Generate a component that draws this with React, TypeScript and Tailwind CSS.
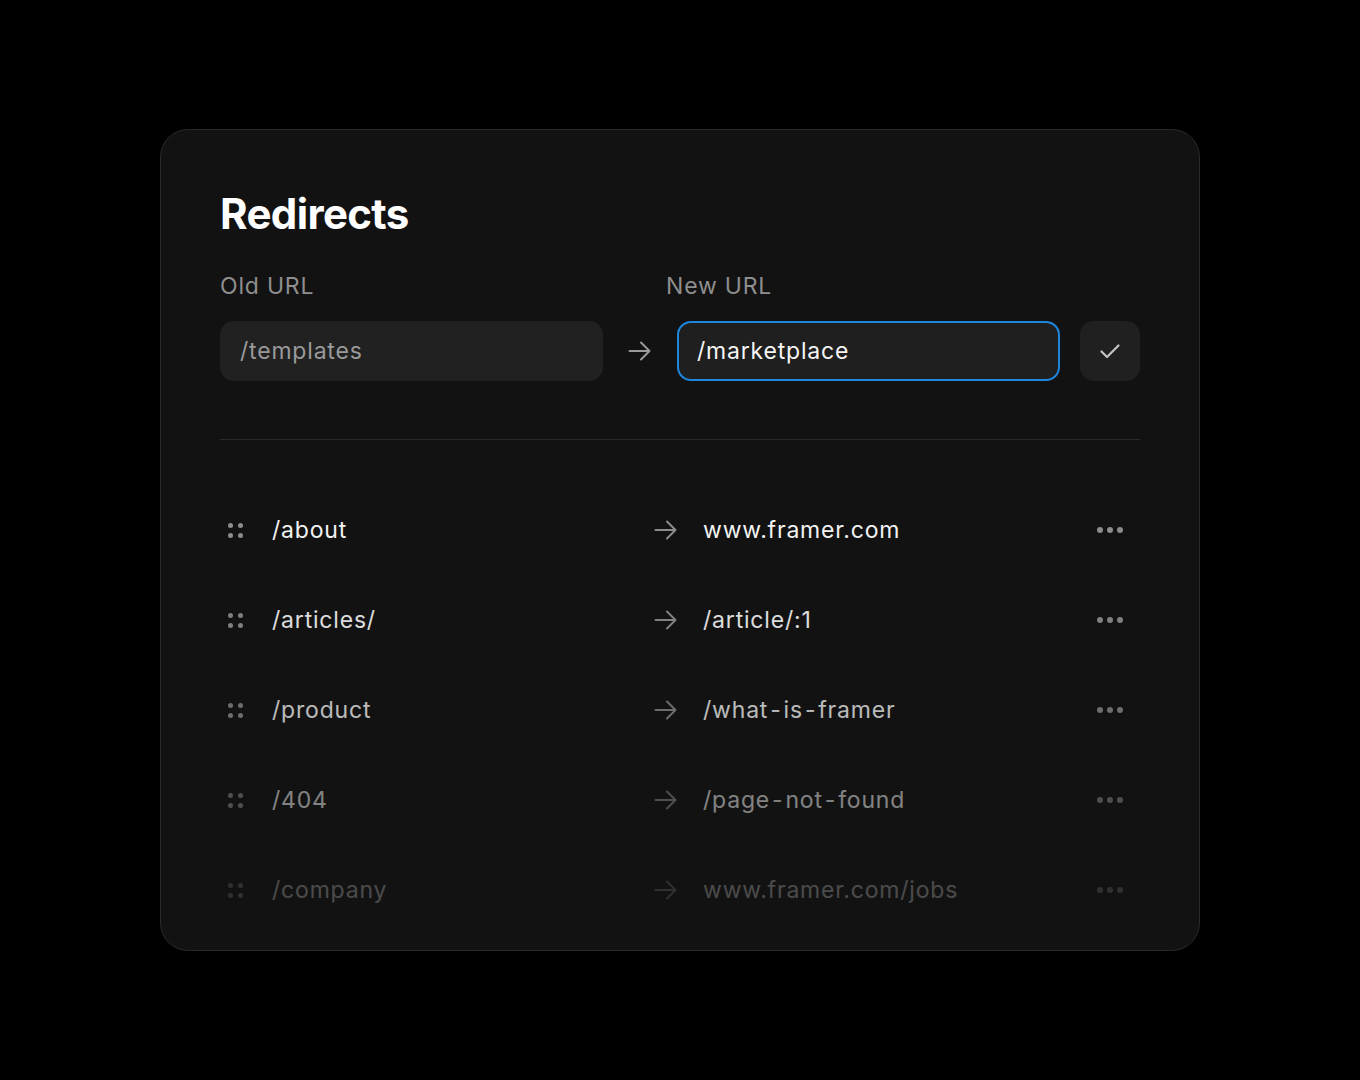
import React from "react";

const rows = [
  { from: "/about", to: "www.framer.com", fade: "opacity-100" },
  { from: "/articles/", to: "/article/:1", fade: "opacity-90" },
  { from: "/product", to: "/what-is-framer", fade: "opacity-75" },
  { from: "/404", to: "/page-not-found", fade: "opacity-50" },
  { from: "/company", to: "www.framer.com/jobs", fade: "opacity-25" },
];

function Arrow({ className }: { className?: string }) {
  return (
    <svg width="24" height="24" viewBox="0 0 24 24" fill="none" className={className}>
      <path d="M1.5 12h20M13 3.5l8.5 8.5-8.5 8.5" stroke="currentColor" strokeWidth="2" strokeLinecap="round" strokeLinejoin="round" />
    </svg>
  );
}

function Handle() {
  return (
    <div className="grid grid-cols-2 gap-[5px] w-[15px]">
      <span className="w-[5px] h-[5px] rounded-full bg-[#8c8c8c]" />
      <span className="w-[5px] h-[5px] rounded-full bg-[#8c8c8c]" />
      <span className="w-[5px] h-[5px] rounded-full bg-[#8c8c8c]" />
      <span className="w-[5px] h-[5px] rounded-full bg-[#8c8c8c]" />
    </div>
  );
}

function More() {
  return (
    <div className="flex gap-[4px]">
      <span className="w-[6px] h-[6px] rounded-full bg-[#8c8c8c]" />
      <span className="w-[6px] h-[6px] rounded-full bg-[#8c8c8c]" />
      <span className="w-[6px] h-[6px] rounded-full bg-[#8c8c8c]" />
    </div>
  );
}

// hyphens in the reference sit with a little air around them
function Spaced({ text }: { text: string }) {
  const parts = text.split("-");
  return (
    <>
      {parts.map((p, i) => (
        <React.Fragment key={i}>
          {i > 0 && <span className="px-[2px]">-</span>}
          {p}
        </React.Fragment>
      ))}
    </>
  );
}

export default function App() {
  return (
    <div
      className="min-h-[1080px] w-full bg-black flex justify-center pt-[129px]"
      style={{ fontFamily: "Inter, 'Noto Sans', sans-serif" }}
    >
      <div className="w-[1040px] h-[822px] rounded-[28px] border border-[#2a2a2a] bg-[#121212] px-[59px] pt-[60px] text-[23px] tracking-[0.035em]">
        <h1 className="text-[42px] leading-[48px] font-bold tracking-[-0.015em] text-white">Redirects</h1>

        <div className="flex mt-[34px] leading-[28px] text-[#8e8e8e]">
          <div className="w-[446px]">Old URL</div>
          <div>New URL</div>
        </div>

        <div className="flex items-center mt-[21px]">
          <div className="w-[383px] h-[60px] rounded-[14px] bg-[#212121] flex items-center px-[20px] text-[#9a9a9a]">
            /templates
          </div>
          <div className="w-[74px] flex justify-center text-[#9a9a9a]">
            <Arrow />
          </div>
          <div className="w-[383px] h-[60px] rounded-[14px] bg-[#1f1f1f] border-2 border-[#1f86de] flex items-center px-[18px] text-[#f5f5f5]">
            /marketplace
          </div>
          <button className="ml-[20px] w-[60px] h-[60px] rounded-[14px] bg-[#202020] flex items-center justify-center text-[#c4c4c4]">
            <svg width="24" height="24" viewBox="0 0 24 24" fill="none">
              <path d="M3.5 12.5l5.5 5.5L20.5 6.5" stroke="currentColor" strokeWidth="2.2" strokeLinecap="round" strokeLinejoin="round" />
            </svg>
          </button>
        </div>

        <div className="h-px bg-[#2a2a2a] mt-[58px]" />

        <div className="flex flex-col gap-[30px] mt-[60px]">
          {rows.map((r) => (
            <div key={r.from} className={`flex items-center h-[60px] ${r.fade}`}>
              <div className="w-[52px] pl-[8px]">
                <Handle />
              </div>
              <div className="w-[382px] text-[#f2f2f2]">{r.from}</div>
              <div className="w-[49px] text-[#8c8c8c]">
                <Arrow />
              </div>
              <div className="flex-1 text-[#f2f2f2]">
                <Spaced text={r.to} />
              </div>
              <div className="pr-[17px]">
                <More />
              </div>
            </div>
          ))}
        </div>
      </div>
    </div>
  );
}
